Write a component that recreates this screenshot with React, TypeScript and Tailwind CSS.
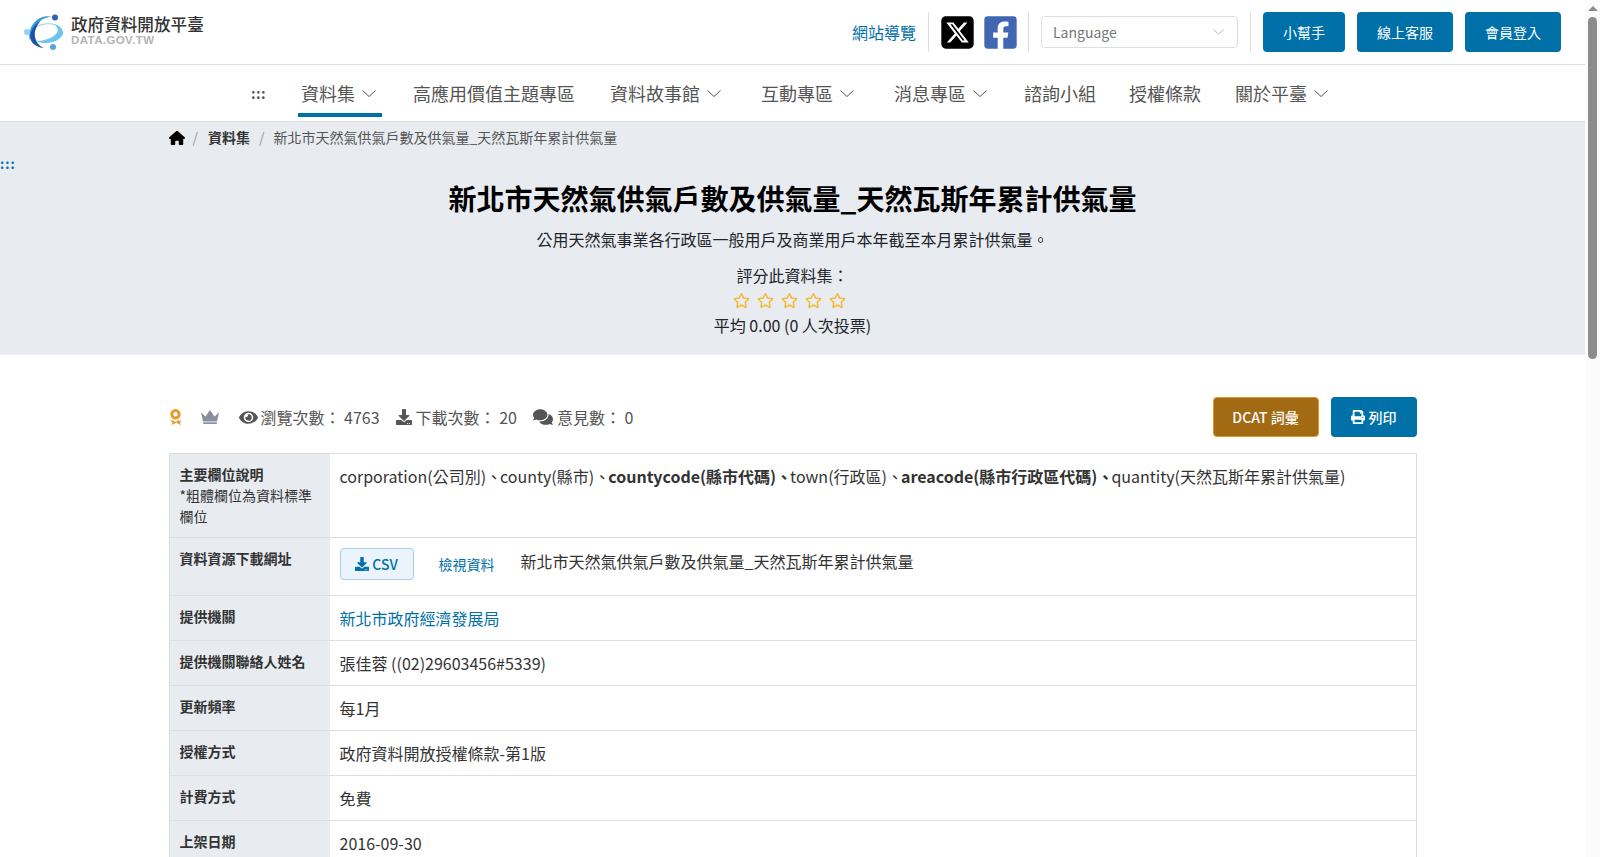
import type { ReactNode } from 'react';
import { FaEye, FaDownload, FaComments, FaPrint, FaRegStar, FaFacebookSquare } from 'react-icons/fa';
import { FaSquareXTwitter, FaHouse } from 'react-icons/fa6';

function Logo() {
  return (
    <div className="flex items-center gap-[7px]">
      <svg width="40" height="37" viewBox="0 0 40 37" fill="none">
        <ellipse cx="22" cy="19" rx="16" ry="9" stroke="#8fd4f0" strokeWidth="1" transform="rotate(-8 22 19)" />
        <path d="M6 27C2 14 14 -1 28 3 18 3 10 10 8 20 7 23 6 25 6 27z" fill="#3a9bdc" />
        <path d="M20 34C10 33 4 27 7 18 9 13 12 9 17 6 12 12 10 18 11 23 12 28 15 32 20 34z" fill="#1f4fa8" />
        <path d="M12 27C24 32 36 27 39 20 40 15 34 11 30 10 35 14 35 18 31 21 26 25 18 27 12 27z" fill="#6cc6ea" />
        <circle cx="31" cy="3.500" r="3" fill="#2f5fb5" />
        <circle cx="3" cy="18" r="3" fill="#8ed3f0" />
        <circle cx="29" cy="33" r="3" fill="#4fa9e0" />
      </svg>
      <div className="flex flex-col pb-[5px]">
        <span className="text-[16.600px] font-medium leading-[20px] text-[#333]">政府資料開放平臺</span>
        <span className="text-[11.500px] leading-[12px] font-bold text-[#b5b5b5] font-['Liberation_Sans',sans-serif] tracking-[0.4px]">DATA.GOV.TW</span>
      </div>
    </div>
  );
}

function Chevron({ w = 14, color = '#555' }: { w?: number; color?: string }) {
  return (
    <svg width={w} height={w / 2} viewBox="0 0 14 7" fill="none" stroke={color} strokeWidth="1">
      <polyline points="0.500,0.500 7,6.500 13.500,0.500" />
    </svg>
  );
}

function HeaderButton({ width, children }: { width: string; children: ReactNode }) {
  return (
    <button className={`h-10 ${width} rounded-[4px] bg-[#0070a9] text-white text-[14px]`}>{children}</button>
  );
}

function NavItem({ label, menu, active, className = '' }: { label: string; menu?: boolean; active?: boolean; className?: string }) {
  return (
    <div className={`flex h-[52px] items-center border-b-4 px-[3px] pt-2 ${active ? 'border-[#0070a9]' : 'border-transparent'} ${className}`}>
      <span>{label}</span>
      {menu && (
        <span className="ml-[7px] mr-[3px] mt-[1px]">
          <Chevron />
        </span>
      )}
    </div>
  );
}

function Row({ label, children, h }: { label: ReactNode; children: ReactNode; h: string }) {
  return (
    <div className={`flex ${h} border-b border-[#dcdee2]`}>
      <div className="w-[160px] shrink-0 bg-[#e8ebf0] px-[10px] py-[10px] text-[14px] leading-[21px] font-bold text-[#333]">{label}</div>
      <div className="flex-1 px-[10px] py-[10px] text-[16px] leading-6 text-[#333]">{children}</div>
    </div>
  );
}

function Dun() {
  return <span className="tracking-[-2px]">、</span>;
}

function Medal() {
  return (
    <svg width="13" height="16" viewBox="0 0 13 16" fill="none">
      <circle cx="6.500" cy="5.200" r="3.700" stroke="#e89a2c" strokeWidth="3" />
      <path d="M0.500 11.500h4l1.200 1.200h1.600l1.200-1.200h4l-1.500 1.800 1 2.700-3.500-1.500-1.200-1-1.200 1-3.500 1.500 1-2.700z" fill="#e89a2c" />
    </svg>
  );
}

function Crown() {
  return (
    <svg width="18" height="14" viewBox="0 0 18 14" fill="#8a8fa0">
      <path d="M0 2.500l4.500 4L9 0l4.500 6.500 4.500-4-2 9H2z" />
      <rect x="2.200" y="12.300" width="13.600" height="1.700" />
    </svg>
  );
}

export default function App() {
  return (
    <div className="flex h-screen overflow-hidden bg-white font-['Noto_Sans_CJK_TC','Noto_Sans',sans-serif] text-[#212529]">
      <div className="min-w-0 flex-1">
        {/* top bar */}
        <header className="flex h-[65px] items-center justify-between border-b border-[#dcdee8] pl-6 pr-6">
          <Logo />
          <div className="flex items-center">
            <a className="text-[16px] text-[#0070a9]">網站導覽</a>
            <div className="ml-3 mr-[10px] h-10 w-px bg-[#dcdee2]" />
            <FaSquareXTwitter size={37} className="text-black" />
            <FaFacebookSquare size={37} className="ml-[6px] text-[#4267b2]" />
            <div className="ml-[9px] mr-3 h-10 w-px bg-[#dcdee2]" />
            <div className="flex h-8 w-[197px] items-center justify-between rounded-[4px] border border-[#dcdee8] pl-[11px] pr-[13px] text-[14px] text-[#777]">
              <span>Language</span>
              <Chevron w={11} color="#aaa" />
            </div>
            <div className="ml-3 mr-3 h-10 w-px bg-[#dcdee2]" />
            <div className="flex gap-3">
              <HeaderButton width="w-[82px]">小幫手</HeaderButton>
              <HeaderButton width="w-[96px]">線上客服</HeaderButton>
              <HeaderButton width="w-[96px]">會員登入</HeaderButton>
            </div>
          </div>
        </header>

        {/* main nav */}
        <nav className="flex h-[57px] items-start justify-center border-b border-[#dcdee2] text-[18px] text-[#555]">
          <span className="mr-[32px] mt-[16px] text-[14px] font-bold leading-6 tracking-[0.5px]">:::</span>
          <NavItem label="資料集" menu active />
          <NavItem label="高應用價值主題專區" className="ml-[28px]" />
          <NavItem label="資料故事館" menu className="ml-[29px]" />
          <NavItem label="互動專區" menu className="ml-[31px]" />
          <NavItem label="消息專區" menu className="ml-[31px]" />
          <NavItem label="諮詢小組" className="ml-[28px]" />
          <NavItem label="授權條款" className="ml-[27px]" />
          <NavItem label="關於平臺" menu className="ml-[28px]" />
        </nav>

        {/* hero */}
        <section className="relative h-[233px] bg-[#e8ebf0]">
          <span className="absolute left-0 top-[32px] text-[13px] font-bold leading-5 tracking-[1px] text-[#0070a9]">:::</span>
          <div className="mx-auto flex h-[31px] w-[1248px] items-center text-[14px] text-[#555]">
            <FaHouse size={16} className="text-black" />
            <span className="ml-[8px] text-[#999]">/</span>
            <span className="ml-[10px] font-bold text-[#333]">資料集</span>
            <span className="ml-[9px] text-[#999]">/</span>
            <span className="ml-[9px]">新北市天然氣供氣戶數及供氣量_天然瓦斯年累計供氣量</span>
          </div>
          <div className="flex flex-col items-center text-center text-[#212529]">
            <h1 className="mt-[24px] text-[28px] font-bold leading-[42px] text-black">新北市天然氣供氣戶數及供氣量_天然瓦斯年累計供氣量</h1>
            <p className="mt-[8px] text-[16px] leading-6">公用天然氣事業各行政區一般用戶及商業用戶本年截至本月累計供氣量。</p>
            <p className="mt-[12px] text-[16px] leading-6">評分此資料集：</p>
            <div className="mt-[1px] flex h-6 items-center gap-[7px] pr-[6px]">
              <FaRegStar size={17} className="text-[#f5b92e]" />
              <FaRegStar size={17} className="text-[#f5b92e]" />
              <FaRegStar size={17} className="text-[#f5b92e]" />
              <FaRegStar size={17} className="text-[#f5b92e]" />
              <FaRegStar size={17} className="text-[#f5b92e]" />
            </div>
            <p className="mt-[1px] text-[16px] leading-6">平均 0.00 (0 人次投票)</p>
          </div>
        </section>

        {/* detail */}
        <main className="mx-auto w-[1248px]">
          <div className="mt-[42px] flex h-10 items-center justify-between">
            <div className="flex items-center text-[16px] text-[#555]">
              <Medal />
              <span className="ml-[19px]">
                <Crown />
              </span>
              <FaEye size={19} className="ml-[20px] text-[#555]" />
              <span className="ml-[3px]">瀏覽次數： 4763</span>
              <FaDownload size={16} className="ml-[16px] text-[#555]" />
              <span className="ml-[4px]">下載次數： 20</span>
              <FaComments size={20} className="ml-[16px] text-[#555]" />
              <span className="ml-[4px]">意見數： 0</span>
            </div>
            <div className="flex gap-3">
              <button className="h-10 w-[106px] rounded-[4px] border border-[#e0962e] bg-[#a36a14] text-[14px] font-medium text-white">DCAT 詞彙</button>
              <button className="flex h-10 w-[86px] items-center justify-center gap-[4px] rounded-[4px] bg-[#0070a9] text-[14px] font-medium text-white">
                <FaPrint size={14} />
                列印
              </button>
            </div>
          </div>

          <div className="mt-4 border border-b-0 border-[#dcdee2]">
            <Row
              h="h-[84px]"
              label={
                <>
                  主要欄位說明
                  <br />
                  <span className="font-normal">*粗體欄位為資料標準欄位</span>
                </>
              }
            >
              corporation(公司別)<Dun />county(縣市)<Dun /><b>countycode(縣市代碼)<Dun /></b>town(行政區)<Dun /><b>areacode(縣市行政區代碼)<Dun /></b>quantity(天然瓦斯年累計供氣量)
            </Row>
            <Row h="h-[58px]" label="資料資源下載網址">
              <div className="flex items-center">
                <a className="flex h-8 w-[74px] items-center justify-center gap-[3px] rounded-[4px] border border-[#a8cdf0] bg-[#ebf3fc] text-[14px] font-medium text-[#0070a9]">
                  <FaDownload size={14} />
                  CSV
                </a>
                <a className="ml-[25px] text-[14px] text-[#0070a9]">檢視資料</a>
                <span className="ml-[26px] pb-[6px] text-[16px]">新北市天然氣供氣戶數及供氣量_天然瓦斯年累計供氣量</span>
              </div>
            </Row>
            <Row h="h-[45px]" label="提供機關">
              <a className="text-[#0070a9]">新北市政府經濟發展局</a>
            </Row>
            <Row h="h-[45px]" label="提供機關聯絡人姓名">張佳蓉 ((02)29603456#5339)</Row>
            <Row h="h-[45px]" label="更新頻率">每1月</Row>
            <Row h="h-[45px]" label="授權方式">政府資料開放授權條款-第1版</Row>
            <Row h="h-[45px]" label="計費方式">免費</Row>
            <Row h="h-[45px]" label="上架日期">2016-09-30</Row>
          </div>
        </main>
      </div>

      {/* scrollbar as drawn by the browser in the reference */}
      <aside className="flex h-full w-[15px] shrink-0 flex-col items-center bg-[#fbfbfb] pt-[6px]">
        <div className="h-0 w-0 border-x-[5px] border-b-[5px] border-x-transparent border-b-[#8c8c8c]" />
        <div className="mt-[6px] h-[342px] w-[9px] rounded-[5px] bg-[#8c8c8c]" />
      </aside>
    </div>
  );
}
